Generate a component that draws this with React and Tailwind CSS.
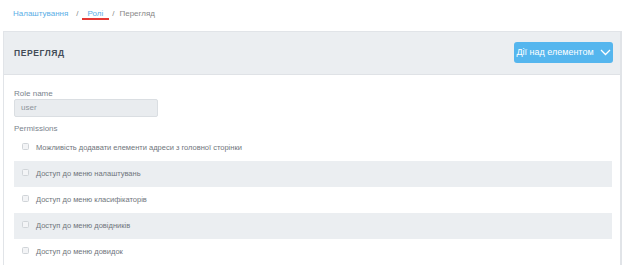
import React from "react";

const perms = [
  "Можливість додавати елементи адреси з головної сторінки",
  "Доступ до меню налаштувань",
  "Доступ до меню класифікаторів",
  "Доступ до меню довідників",
  "Доступ до меню довидок",
];

export default function App() {
  return (
    <div className="w-[624px] h-[265px] bg-white overflow-hidden" style={{ fontFamily: '"Liberation Sans", Arial, sans-serif' }}>
      <div className="h-[31px] pl-[13px] pt-[9px] flex items-start text-[8px] leading-[10px]">
        <span className="text-[#5aaee6]">Налаштування</span>
        <span className="text-[#888] ml-[8px]">/</span>
        <span className="ml-[3px] px-[6px] pb-[2px] border-b-2 border-[#e53935] text-[#5aaee6] h-[11px] leading-[10px]">Ролі</span>
        <span className="text-[#888] ml-[3px]">/</span>
        <span className="text-[#888] ml-[5px]">Перегляд</span>
      </div>
      <div className="ml-[3px] w-[619px] h-[300px] border-l border-r-2 border-t border-[#e1e4e8] flex flex-col">
        <div className="h-[43px] bg-[#ebeef1] border-b border-[#dfe2e6] flex items-center justify-between pl-[10px] pr-[7px] shrink-0">
          <span className="text-[8.5px] font-bold tracking-[0.6px] text-[#434c57]">ПЕРЕГЛЯД</span>
          <button className="h-[21px] w-[99px] rounded-[3px] bg-[#55b6ee] text-white text-[9px] flex items-center justify-center gap-[6px] mt-[-1px]">
            <span>Дії над елементом</span>
            <svg width="11" height="7" viewBox="0 0 11 7" fill="none">
              <path d="M1 1L5.5 5.5L10 1" stroke="white" strokeWidth="1.3" />
            </svg>
          </button>
        </div>
        <div className="pl-[10px] pr-[8px] pt-[14px] flex flex-col">
          <div className="text-[8px] leading-[10px] text-[#7a838d]">Role name</div>
          <div className="w-[144px] h-[18px] bg-[#e9ecef] border border-[#dadee2] rounded-[2px] flex items-center pl-[6px] text-[8px] text-[#8f959c]">user</div>
          <div className="mt-[7px] text-[8px] leading-[10px] text-[#7a838d]">Permissions</div>
          <div className="mt-[1px] flex flex-col">
            {perms.map((p, i) => (
              <div key={i} className={`h-[26px] flex items-center pl-[8px] ${i % 2 === 1 ? "bg-[#ebeef1]" : ""}`}>
                <span className="w-[7px] h-[7px] border border-[#d0d4d8] rounded-[1.5px] bg-[#f3f4f6] mt-[-4px]" />
                <span className="ml-[7px] text-[7.5px] text-[#6f757c]">{p}</span>
              </div>
            ))}
          </div>
        </div>
      </div>
    </div>
  );
}
